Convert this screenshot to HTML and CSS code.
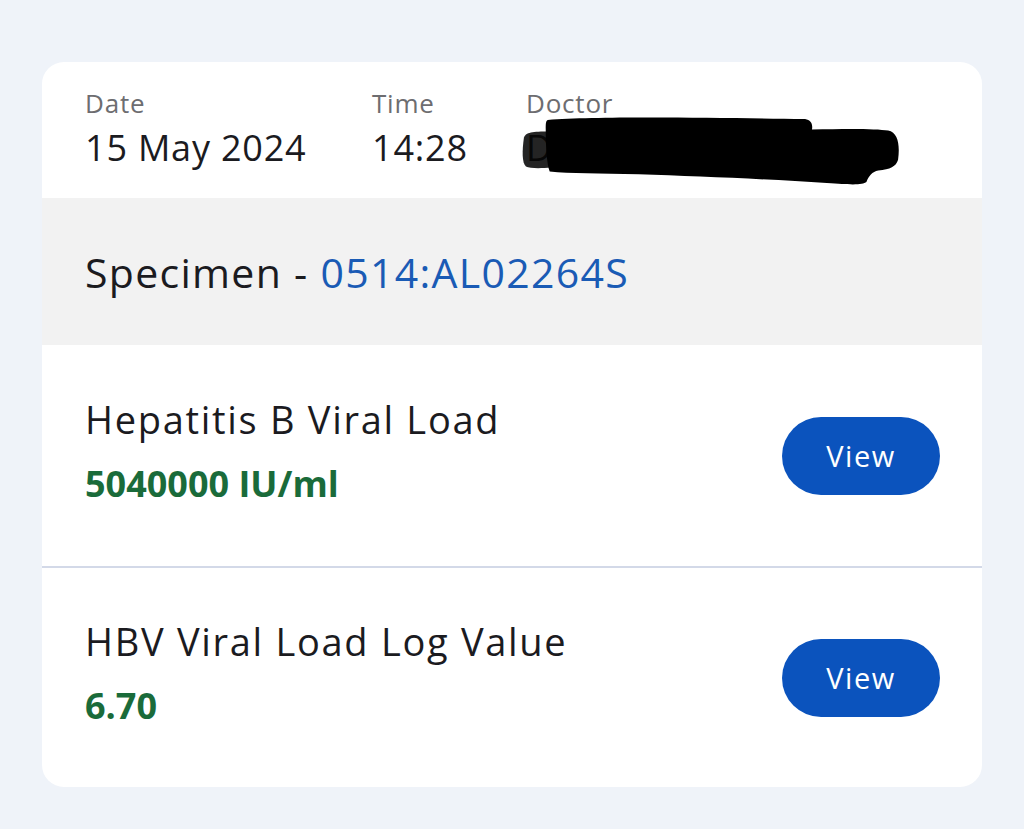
FILE: index.html
```html
<!DOCTYPE html>
<html>
<head>
<meta charset="utf-8">
<link rel="stylesheet" href="styles.css">
</head>
<body>
<div class="card">
  <div class="meta">
    <div class="meta-col col-date">
      <div class="meta-label">Date</div>
      <div class="meta-value">15 May 2024</div>
    </div>
    <div class="meta-col col-time">
      <div class="meta-label">Time</div>
      <div class="meta-value">14:28</div>
    </div>
    <div class="meta-col col-doctor">
      <div class="meta-label">Doctor</div>
      <div class="meta-value doctor-value">
        <span class="doctor-name">Dr Redacted Name</span>
        <svg class="redaction" viewBox="0 0 390 72" preserveAspectRatio="none">
          <path d="M4 22 C6 17 12 16 30 16 L32 53 C20 54 10 54 6 52 C2 48 2 36 4 22 Z" fill="#000" fill-opacity="0.86"/>
          <path d="M28 4 C80 0 200 2 288 3 C294 4 296 8 295 14 C330 13 360 13 372 15 C382 17 384 30 382 45 C380 52 374 55 362 56 C356 57 352 62 350 68 C346 71 336 71 310 69 C250 65 180 62 120 60 C80 59 50 59 30 57 C27 50 26 30 26 14 C26 8 26 5 28 4 Z" fill="#000"/>
        </svg>
      </div>
    </div>
  </div>

  <div class="specimen">
    <span class="specimen-label">Specimen - </span><span class="specimen-id">0514:AL02264S</span>
  </div>

  <div class="result">
    <div class="result-text">
      <div class="result-name">Hepatitis B Viral Load</div>
      <div class="result-value">5040000 IU/ml</div>
    </div>
    <button class="view-btn">View</button>
  </div>

  <div class="result">
    <div class="result-text">
      <div class="result-name">HBV Viral Load Log Value</div>
      <div class="result-value">6.70</div>
    </div>
    <button class="view-btn">View</button>
  </div>
</div>
</body>
</html>
```

FILE: styles.css
```css
* { box-sizing: border-box; }

body {
  margin: 0;
  background: #eff3f9;
  font-family: "Open Sans", "Lato", sans-serif;
  color: #1b1b1f;
}

.card {
  margin: 62px 0 0 42px;
  width: 940px;
  background: #ffffff;
  border-radius: 22px;
  overflow: hidden;
}

.meta {
  display: flex;
  height: 136px;
  padding: 26px 0 0 43px;
}

.col-date { width: 287px; }
.col-time { width: 154px; }
.col-doctor { flex: 1; }

.meta-label {
  font-size: 26px;
  line-height: 30px;
  letter-spacing: 0.8px;
  color: #6d6d70;
}

.meta-value {
  font-size: 36px;
  line-height: 44px;
  letter-spacing: 0.8px;
  margin-top: 8px;
  color: #1b1b1f;
}

.doctor-value {
  position: relative;
  white-space: nowrap;
}

.doctor-name {
  color: #333;
}

.redaction {
  position: absolute;
  left: -6px;
  top: -10px;
  width: 386px;
  height: 70px;
}

.specimen {
  height: 147px;
  background: #f2f2f2;
  display: flex;
  align-items: center;
  padding-left: 43px;
  font-size: 41px;
  letter-spacing: 1.3px;
}

.specimen-label { color: #1b1b1f; white-space: pre; }
.specimen-id { color: #1a5bb5; }

.result {
  height: 221px;
  display: flex;
  align-items: center;
  justify-content: space-between;
  padding: 0 42px 0 43px;
}

.result + .result {
  border-top: 2px solid #d3d9e8;
}

.result-text {
  padding-bottom: 10px;
}

.result-name {
  font-size: 38px;
  line-height: 46px;
  letter-spacing: 1.7px;
  color: #1b1b1f;
}

.result-value {
  font-size: 36px;
  font-weight: 700;
  line-height: 44px;
  margin-top: 20px;
  color: #1a6b3a;
}

.view-btn {
  width: 158px;
  height: 78px;
  border: none;
  border-radius: 39px;
  background: #0b53bd;
  color: #ffffff;
  font-family: "Open Sans", "Lato", sans-serif;
  font-size: 29px;
  letter-spacing: 1.5px;
  padding: 0;
}
```
